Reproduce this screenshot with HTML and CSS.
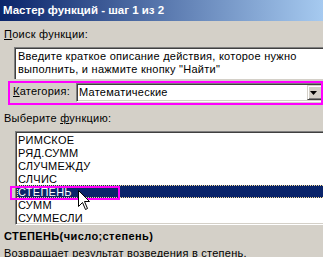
FILE: index.html
```html
<!DOCTYPE html>
<html>
<head>
<meta charset="utf-8">
<link rel="stylesheet" href="styles.css">
</head>
<body>
<div class="window">
  <div class="titlebar">Мастер функций - шаг 1 из 2</div>
  <div class="label l-search"><u>П</u>оиск функции:</div>
  <div class="search">Введите краткое описание действия, которое нужно<br>выполнить, и нажмите кнопку "Найти"</div>
  <div class="category">
    <span class="cat-label"><u>К</u>атегория:</span>
    <div class="combo">
      <span class="combo-text">Математические</span>
      <span class="combo-btn"><svg width="7" height="4" viewBox="0 0 7 4"><path d="M0 0H7L3.5 4Z" fill="#000"/></svg></span>
    </div>
  </div>
  <div class="label l-select">Выберите <u>ф</u>ункцию:</div>
  <div class="list">
    <div class="item">РИМСКОЕ</div>
    <div class="item">РЯД.СУММ</div>
    <div class="item">СЛУЧМЕЖДУ</div>
    <div class="item">СЛЧИС</div>
    <div class="item selected">СТЕПЕНЬ</div>
    <div class="item">СУММ</div>
    <div class="item">СУММЕСЛИ</div>
  </div>
  <div class="signature">СТЕПЕНЬ(число;степень)</div>
  <div class="desc">Возвращает результат возведения в степень.</div>
  <div class="mark"></div>
  <svg class="cursor" width="13" height="21" viewBox="0 0 13 21"><path d="M0.5 0.5V16.5L4.5 12.5L7.5 19.5L9.5 18.5L6.5 11.5H11.5Z" fill="#fff" stroke="#000" stroke-width="1"/></svg>
</div>
</body>
</html>
```
FILE: styles.css
```css
html, body {
  margin: 0;
  padding: 0;
}
body {
  background: #d4d0c8;
  font-family: "Liberation Sans", Arial, sans-serif;
  font-size: 11px;
  line-height: 13px;
  letter-spacing: 0.25px;
  color: #000;
}
.window {
  position: relative;
  width: 323px;
  height: 257px;
  overflow: hidden;
  background: #d4d0c8;
}
.titlebar {
  height: 21px;
  line-height: 20px;
  padding-left: 3px;
  background: linear-gradient(to right, #0a246a 0%, #a6caf0 100%);
  color: #fff;
  font-weight: bold;
  font-size: 11.5px;
  letter-spacing: 0;
  white-space: nowrap;
}
.label {
  padding-left: 4px;
  white-space: nowrap;
}
.l-search {
  margin-top: 7px;
}
.search {
  margin-top: 6px;
  margin-left: 14px;
  width: 320px;
  height: 32px;
  box-sizing: border-box;
  background: #fff;
  border-top: 1px solid #808080;
  border-left: 1px solid #808080;
  box-shadow: inset 1px 1px 0 #404040;
  padding: 2px 0 0 3px;
  white-space: nowrap;
}
.category {
  margin-top: 2px;
  margin-left: 8px;
  width: 315px;
  height: 24px;
  box-sizing: border-box;
  border: 2px solid #ff00ff;
  display: flex;
  align-items: flex-start;
  overflow: hidden;
}
.cat-label {
  flex: 0 0 66px;
  box-sizing: border-box;
  padding: 2px 0 0 3px;
  white-space: nowrap;
}
.combo {
  flex: 0 0 247px;
  height: 19px;
  box-sizing: border-box;
  background: #fff;
  border-top: 1px solid #808080;
  border-left: 1px solid #808080;
  border-bottom: 1px solid #fff;
  box-shadow: inset 1px 1px 0 #404040, inset 0 -1px 0 #d4d0c8;
  padding: 1px 2px 0 1px;
  display: flex;
  align-items: flex-start;
}
.combo-text {
  flex: 1;
  padding-left: 1px;
  padding-top: 1px;
  white-space: nowrap;
}
.combo-btn {
  flex: 0 0 14px;
  height: 15px;
  box-sizing: border-box;
  background: #d4d0c8;
  border-top: 1px solid #d4d0c8;
  border-left: 1px solid #d4d0c8;
  border-bottom: 1px solid #404040;
  box-shadow: inset 1px 1px 0 #fff, inset 0 -1px 0 #808080;
  display: flex;
  align-items: center;
  justify-content: center;
  padding-right: 2px;
}
.combo-btn svg {
  display: block;
}
.l-select {
  margin-top: 7px;
}
.list {
  margin-top: 6px;
  margin-left: 15px;
  width: 320px;
  box-sizing: border-box;
  background: #fff;
  border-top: 1px solid #808080;
  border-left: 1px solid #808080;
  border-bottom: 1px solid #fff;
  box-shadow: inset 1px 1px 0 #404040, inset 0 -1px 0 #d4d0c8;
  padding: 1px 0 0 1px;
}
.item {
  height: 13px;
  box-sizing: border-box;
  padding: 1px 0 0 1px;
  line-height: 13px;
  white-space: nowrap;
}
.item.selected {
  background: #0a246a;
  color: #fff;
  border: 1px dotted #f5db95;
  padding: 0;
  line-height: 13px;
}
.signature {
  margin-top: 5px;
  padding-left: 4px;
  font-weight: bold;
  letter-spacing: 0.4px;
  white-space: nowrap;
}
.desc {
  margin-top: 4px;
  padding-left: 4px;
  white-space: nowrap;
}
.mark {
  position: absolute;
  left: 10px;
  top: 186px;
  width: 110px;
  height: 14px;
  box-sizing: border-box;
  border: 2px solid #ff00ff;
}
.cursor {
  position: absolute;
  left: 78px;
  top: 190px;
}
```
